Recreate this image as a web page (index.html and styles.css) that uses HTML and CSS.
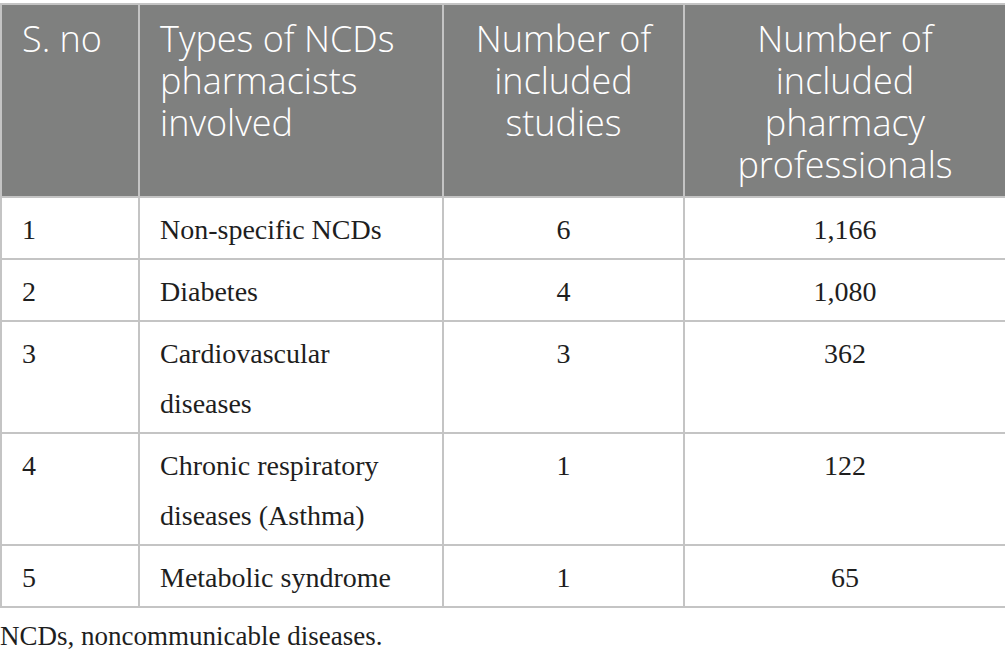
FILE: index.html
```html
<!DOCTYPE html>
<html>
<head>
    <title>NCDs and pharmacy professionals</title>
    <link rel="stylesheet" href="styles.css">
</head>
<body>
    <div class="wrap">
        <table class="ncd-table">
            <colgroup>
                <col class="c-no">
                <col class="c-type">
                <col class="c-studies">
                <col class="c-prof">
            </colgroup>
            <thead>
                <tr>
                    <th>S. no</th>
                    <th>Types of NCDs pharmacists involved</th>
                    <th class="center">Number of included studies</th>
                    <th class="center">Number of included pharmacy professionals</th>
                </tr>
            </thead>
            <tbody>
                <tr>
                    <td>1</td>
                    <td>Non-specific NCDs</td>
                    <td class="center">6</td>
                    <td class="center">1,166</td>
                </tr>
                <tr>
                    <td>2</td>
                    <td>Diabetes</td>
                    <td class="center">4</td>
                    <td class="center">1,080</td>
                </tr>
                <tr>
                    <td>3</td>
                    <td>Cardiovascular<br>diseases</td>
                    <td class="center">3</td>
                    <td class="center">362</td>
                </tr>
                <tr>
                    <td>4</td>
                    <td>Chronic respiratory<br>diseases (Asthma)</td>
                    <td class="center">1</td>
                    <td class="center">122</td>
                </tr>
                <tr>
                    <td>5</td>
                    <td>Metabolic syndrome</td>
                    <td class="center">1</td>
                    <td class="center">65</td>
                </tr>
            </tbody>
        </table>
        <p class="footnote">NCDs, noncommunicable diseases.</p>
    </div>
</body>
</html>
```

FILE: styles.css
```css
body {
    margin: 0;
    background: #fff;
}
.wrap {
    padding-top: 3px;
}
.ncd-table {
    width: 1005px;
    border-collapse: collapse;
    table-layout: fixed;
}
.c-no { width: 138px; }
.c-type { width: 304px; }
.c-studies { width: 241px; }
.c-prof { width: 322px; }
.ncd-table th,
.ncd-table td {
    border: 2px solid #c4c4c4;
    vertical-align: top;
    text-align: left;
    padding: 7px 20px 3px;
}
.ncd-table th {
    background: #7f807f;
    color: #fff;
    font-family: "Open Sans", sans-serif;
    font-weight: 300;
    font-size: 36px;
    line-height: 42px;
    padding-top: 13px;
    padding-bottom: 10px;
}
.ncd-table td {
    font-family: "Liberation Serif", serif;
    font-size: 28px;
    line-height: 50px;
    color: #1e1e1e;
}
.ncd-table .center {
    text-align: center;
}
.footnote {
    margin: 8px 0 0;
    font-family: "Liberation Serif", serif;
    font-size: 27px;
    line-height: 40px;
    color: #1e1e1e;
}
```
